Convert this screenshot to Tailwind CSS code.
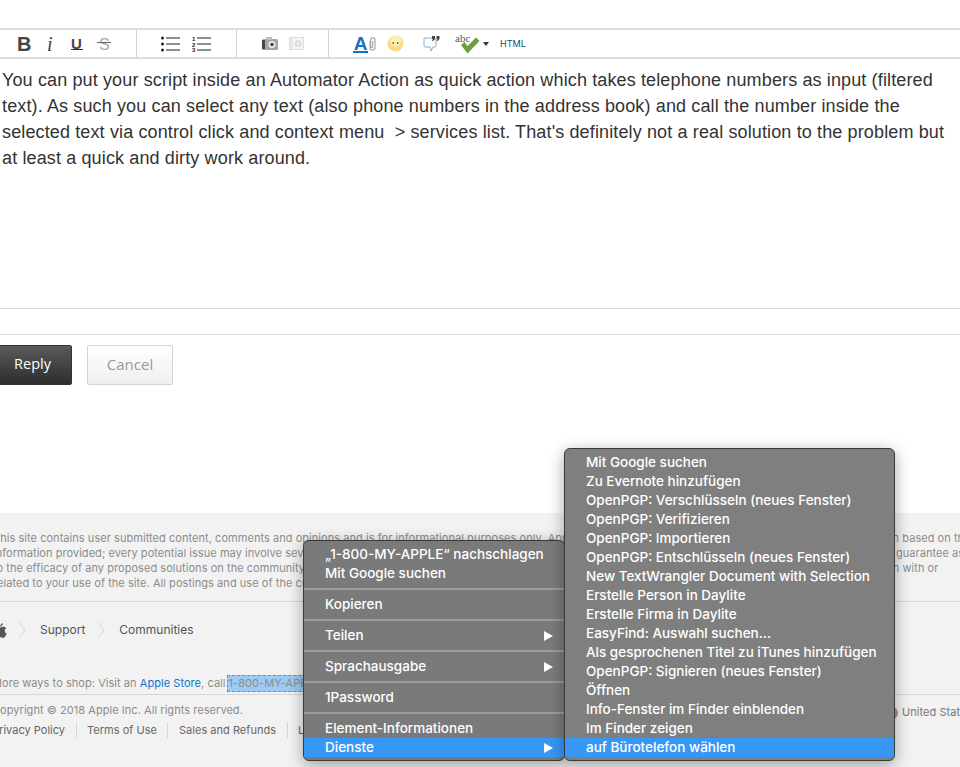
<!DOCTYPE html>
<html lang="en">
<head>
    <meta charset="UTF-8">
    <meta name="viewport" content="width=device-width, initial-scale=1.0">
    <title>Reply</title>
    <script src="https://cdn.jsdelivr.net/npm/@tailwindcss/browser@4"></script>
</head>
<body class="bg-white">
<div class="relative w-[960px] h-[767px] overflow-hidden font-['Liberation_Sans',sans-serif]">

    <!-- editor toolbar -->
    <div class="mt-[28px] h-[31px] border-y-2 border-[#dcdcdc] flex items-center box-border">
        <div class="w-[137px] h-full border-r border-[#d5d0d0] flex items-center relative">
            <span class="absolute left-[17px] top-[-1px] text-[20px] font-bold text-[#444]">B</span>
            <span class="absolute left-[47px] top-[-1px] text-[20px] italic font-['Liberation_Serif',serif] text-[#444]">i</span>
            <span class="absolute left-[71px] top-[3px] text-[15px] font-bold text-[#444]">U</span>
            <div class="absolute left-[71px] top-[19px] w-[12px] h-[1px] bg-[#333]"></div>
            <span class="absolute left-[99px] top-[3px] text-[16px] text-[#aaa]">S</span>
            <div class="absolute left-[97px] top-[12px] w-[14px] h-[1px] bg-[#666]"></div>
        </div>
        <div class="w-[100px] h-full border-r border-[#d5d0d0] flex items-center pl-[24px] gap-[12px]">
            <svg width="19" height="16" viewBox="0 0 19 16"><g fill="#222"><circle cx="1.500" cy="2" r="1.500"/><circle cx="1.500" cy="8" r="1.500"/><circle cx="1.500" cy="14" r="1.500"/><rect x="5" y="1.500" width="14" height="1"/><rect x="5" y="7.500" width="14" height="1"/><rect x="5" y="13.500" width="14" height="1"/></g></svg>
            <svg width="19" height="16" viewBox="0 0 19 16"><g fill="#222"><text x="0" y="4.500" font-size="6" font-weight="700" font-family="Liberation Sans">1</text><text x="0" y="10.500" font-size="6" font-weight="700" font-family="Liberation Sans">2</text><text x="0" y="16" font-size="6" font-weight="700" font-family="Liberation Sans">3</text><rect x="5" y="1.500" width="14" height="1"/><rect x="5" y="7.500" width="14" height="1"/><rect x="5" y="13.500" width="14" height="1"/></g></svg>
        </div>
        <div class="w-[92px] h-full border-r border-[#d5d0d0] flex items-center pl-[25px] gap-[11px]">
            <svg width="16" height="13" viewBox="0 0 16 13"><rect x="0" y="2" width="16" height="11" rx="1.500" fill="#a5a5a5"/><rect x="0" y="3" width="3" height="9" fill="#444"/><rect x="4" y="0" width="6" height="3" fill="#bbb"/><circle cx="10" cy="7.500" r="3.500" fill="#eee"/><circle cx="10" cy="7.500" r="1.800" fill="#444"/></svg>
            <svg width="15" height="13" viewBox="0 0 15 13"><rect x="0.500" y="0.500" width="14" height="12" fill="#f4f4f4" stroke="#ddd"/><rect x="0.500" y="0.500" width="3" height="12" fill="#e6e6e6"/><circle cx="9" cy="6.500" r="3.500" fill="#ddd"/><path d="M8 4.500 L11 6.500 L8 8.500 Z" fill="#f6f6f6"/></svg>
        </div>
        <div class="h-full flex items-center pl-[24px] relative">
            <span class="text-[19px] leading-[17px] font-bold text-[#1273c0] border-b-2 border-[#1273c0] w-[15px] h-[18px] flex justify-center">A</span>
            <svg class="ml-[1px]" width="7" height="14" viewBox="0 0 7 14"><path d="M1 4 V10.500 a2.500 2.500 0 0 0 5 0 V3 a2.200 2.200 0 0 0 -4.400 0 V9.500 a1 1 0 0 0 2 0 V4" fill="none" stroke="#aaa" stroke-width="1.200"/></svg>
            <svg class="ml-[11px]" width="17" height="17" viewBox="0 0 17 17"><circle cx="8.500" cy="8.500" r="8" fill="#fbdc85"/><circle cx="8.500" cy="6" r="5.500" fill="#fdeeb8"/><rect x="5.500" y="7" width="1.500" height="2" rx="0.700" fill="#555"/><rect x="10" y="7" width="1.500" height="2" rx="0.700" fill="#555"/></svg>
            <svg class="ml-[19px]" width="18" height="18" viewBox="0 0 18 18"><path d="M1 3 H9 V4 H13 V11 a1 1 0 0 1 -1 1 H10 L8 16 L7 12 H2 a1 1 0 0 1 -1 -1 Z" fill="#fff" stroke="#7db0e0"/><path d="M9 1 h3 v3 l-2 2 h-1 l1 -2 h-1 Z M13.500 1 h3 v3 l-2 2 h-1 l1 -2 h-1 Z" fill="#444"/></svg>
            <div class="ml-[14px] w-[24px] h-[22px] relative">
                <span class="absolute left-0 top-[-3px] text-[11px] font-['Liberation_Serif',serif] text-[#555]">abc</span>
                <svg class="absolute left-[5px] top-[4px]" width="20" height="17" viewBox="0 0 20 17"><path d="M1 8 L4.500 5 L7.500 9 L16 0.500 L19.500 4 L7.500 16.500 Z" fill="#6f9e3f"/></svg>
            </div>
            <span class="ml-[4px] w-0 h-0 border-x-[3px] border-x-transparent border-t-[4px] border-t-[#333]"></span>
            <span class="ml-[11px] text-[9px] font-['Inter',sans-serif] text-[#0d4a7c]">HTML</span>
        </div>
    </div>

    <!-- reply text -->
    <div class="h-[249px] pl-[2px] pt-[8px] text-[18px] leading-[26px] tracking-[0.13px] text-[#333] whitespace-nowrap">
        You can put your script inside an Automator Action as quick action which takes telephone numbers as input (filtered<br>
        text). As such you can select any text (also phone numbers in the address book) and call the number inside the<br>
        selected text via control click and context menu &nbsp;&gt; services list. That's definitely not a real solution to the problem but<br>
        at least a quick and dirty work around.
    </div>
    <div class="h-[27px] border-y border-[#dcdcdc]"></div>

    <!-- buttons -->
    <div class="mt-[10px] flex gap-[15px] font-['Open_Sans',sans-serif] text-[15px]">
        <button class="ml-[-10px] w-[82px] h-[40px] pl-[3px] pb-[2px] rounded-[2px] bg-gradient-to-b from-[#5a5a5a] to-[#2e2e2e] border border-[#333] text-[14.500px] text-white">Reply</button>
        <button class="w-[86px] h-[40px] pb-[2px] rounded-[2px] bg-gradient-to-b from-[#fff] to-[#efefef] border border-[#d4d4d4] text-[#999]">Cancel</button>
    </div>

    <!-- footer -->
    <div class="mt-[128px] h-[254px] bg-[#f2f2f2] font-['Inter',sans-serif] text-[11px] text-[#8c8c8c] whitespace-nowrap">
        <div class="pt-[18px] h-[89px] leading-[15px] tracking-[0.05px] border-b border-[#d6d6d6]">
            <div class="ml-[-7px]">
            This site contains user submitted content, comments and opinions and is for informational purposes only. Apple may provide or recommend responses as a possible solution based on the<br>
            information provided; every potential issue may involve several factors not detailed in the conversations captured in an electronic forum and Apple can therefore provide no guarantee as<br>
            to the efficacy of any proposed solutions on the community forums. Apple disclaims any and all liability for the acts, omissions and conduct of any third parties in connection with or<br>
            related to your use of the site. All postings and use of the content on this site are subject to the Apple Support Communities Terms of Use.
            </div>
        </div>
        <div class="h-[54px] pt-[2px] flex items-center text-[12px] text-[#555]">
            <svg class="ml-[-6px]" width="13" height="15" viewBox="0 0 13 15"><path d="M9 0 C9 2 7.500 3.500 6 3.500 C6 2 7.500 0.500 9 0 Z M6.500 4.500 C7.500 4.500 8 3.800 9.500 3.800 C10.500 3.800 11.500 4.300 12.200 5.300 C10 6.500 10.300 9.700 12.600 10.600 C12 12.500 10.500 15 9.200 15 C8 15 7.700 14.300 6.500 14.300 C5.200 14.300 4.800 15 3.700 15 C2 15 0 11.500 0 8.500 C0 5.500 2 3.800 3.700 3.800 C5 3.800 5.700 4.500 6.500 4.500 Z" fill="#555"/></svg>
            <svg class="ml-[11px]" width="8" height="18" viewBox="0 0 8 18"><path d="M1 1 L7 9 L1 17" fill="none" stroke="#d8d8d8"/></svg>
            <span class="ml-[14px]">Support</span>
            <svg class="ml-[12px]" width="8" height="18" viewBox="0 0 8 18"><path d="M1 1 L7 9 L1 17" fill="none" stroke="#d8d8d8"/></svg>
            <span class="ml-[14px]">Communities</span>
        </div>
        <div class="h-[39px] pt-[18px] leading-[18px] border-b border-[#d6d6d6] tracking-[0.05px]">
            <div class="ml-[-8px]">More ways to shop: Visit an <span class="text-[#0b75cf]">Apple Store</span>, call<span class="inline-block ml-[1px] leading-[15px] bg-[#9ccbf3] border border-dashed border-[#888] px-[1px]">1-800-MY-APPLE</span> or find a reseller.</div>
        </div>
        <div class="h-[28px] pt-[7px] flex justify-between tracking-[0.05px]">
            <span class="ml-[-8px]">Copyright © 2018 Apple Inc. All rights reserved.</span>
            <span class="mr-[-40px] w-[98px] flex items-center text-[#777]"><span class="ml-[-16px] mr-[4px] w-[12px] h-[12px] rounded-full bg-[#b08a90]"></span>United States</span>
        </div>
        <div class="ml-[-8px] flex items-center h-[14px] text-[#666] tracking-[0.02px]">
            <span class="pr-[11px] border-r border-[#d6d6d6]">Privacy Policy</span>
            <span class="px-[10px] border-r border-[#d6d6d6]">Terms of Use</span>
            <span class="px-[11px] border-r border-[#d6d6d6]">Sales and Refunds</span>
            <span class="pl-[10px]">Legal</span>
        </div>
    </div>

    <!-- context menu -->
    <div class="absolute left-[303px] top-[540px] w-[262px] h-[221px] box-border pt-[4px] rounded-[6px] border border-[#3a3a3a] bg-[#7a7a7a] shadow-[0_4px_16px_rgba(0,0,0,0.35)] font-['Inter',sans-serif] text-[13.500px] font-medium text-white">
        <div class="h-[19px] leading-[19px] pl-[21px]">„1-800-MY-APPLE“ nachschlagen</div>
        <div class="h-[19px] leading-[19px] pl-[21px]">Mit Google suchen</div>
        <div class="h-[12px] flex items-center"><div class="w-full h-[2px] bg-[#9c9c9c]"></div></div>
        <div class="h-[19px] leading-[19px] pl-[21px]">Kopieren</div>
        <div class="h-[12px] flex items-center"><div class="w-full h-[2px] bg-[#9c9c9c]"></div></div>
        <div class="h-[19px] leading-[19px] pl-[21px] pr-[11px] flex justify-between items-center">Teilen<span class="w-0 h-0 border-y-[5px] border-y-transparent border-l-[9px] border-l-white"></span></div>
        <div class="h-[12px] flex items-center"><div class="w-full h-[2px] bg-[#9c9c9c]"></div></div>
        <div class="h-[19px] leading-[19px] pl-[21px] pr-[11px] flex justify-between items-center">Sprachausgabe<span class="w-0 h-0 border-y-[5px] border-y-transparent border-l-[9px] border-l-white"></span></div>
        <div class="h-[12px] flex items-center"><div class="w-full h-[2px] bg-[#9c9c9c]"></div></div>
        <div class="h-[19px] leading-[19px] pl-[21px]">1Password</div>
        <div class="h-[12px] flex items-center"><div class="w-full h-[2px] bg-[#9c9c9c]"></div></div>
        <div class="h-[19px] leading-[19px] pl-[21px]">Element-Informationen</div>
        <div class="h-[19px] leading-[19px] pl-[21px] pr-[11px] flex justify-between items-center bg-[#3797f5]">Dienste<span class="w-0 h-0 border-y-[5px] border-y-transparent border-l-[9px] border-l-white"></span></div>
    </div>

    <!-- services submenu -->
    <div class="absolute left-[564px] top-[448px] w-[331px] h-[313px] box-border pt-[4px] rounded-[6px] border border-[#3a3a3a] bg-[#7f7f7f] shadow-[0_4px_16px_rgba(0,0,0,0.35)] font-['Inter',sans-serif] text-[13.500px] font-medium text-white">
        <div class="h-[19px] leading-[19px] pl-[21px]">Mit Google suchen</div>
        <div class="h-[19px] leading-[19px] pl-[21px]">Zu Evernote hinzufügen</div>
        <div class="h-[19px] leading-[19px] pl-[21px]">OpenPGP: Verschlüsseln (neues Fenster)</div>
        <div class="h-[19px] leading-[19px] pl-[21px]">OpenPGP: Verifizieren</div>
        <div class="h-[19px] leading-[19px] pl-[21px]">OpenPGP: Importieren</div>
        <div class="h-[19px] leading-[19px] pl-[21px]">OpenPGP: Entschlüsseln (neues Fenster)</div>
        <div class="h-[19px] leading-[19px] pl-[21px]">New TextWrangler Document with Selection</div>
        <div class="h-[19px] leading-[19px] pl-[21px]">Erstelle Person in Daylite</div>
        <div class="h-[19px] leading-[19px] pl-[21px]">Erstelle Firma in Daylite</div>
        <div class="h-[19px] leading-[19px] pl-[21px]">EasyFind: Auswahl suchen...</div>
        <div class="h-[19px] leading-[19px] pl-[21px]">Als gesprochenen Titel zu iTunes hinzufügen</div>
        <div class="h-[19px] leading-[19px] pl-[21px]">OpenPGP: Signieren (neues Fenster)</div>
        <div class="h-[19px] leading-[19px] pl-[21px]">Öffnen</div>
        <div class="h-[19px] leading-[19px] pl-[21px]">Info-Fenster im Finder einblenden</div>
        <div class="h-[19px] leading-[19px] pl-[21px]">Im Finder zeigen</div>
        <div class="h-[19px] leading-[19px] pl-[21px] bg-[#3797f5]">auf Bürotelefon wählen</div>
    </div>
</div>
</body>
</html>
